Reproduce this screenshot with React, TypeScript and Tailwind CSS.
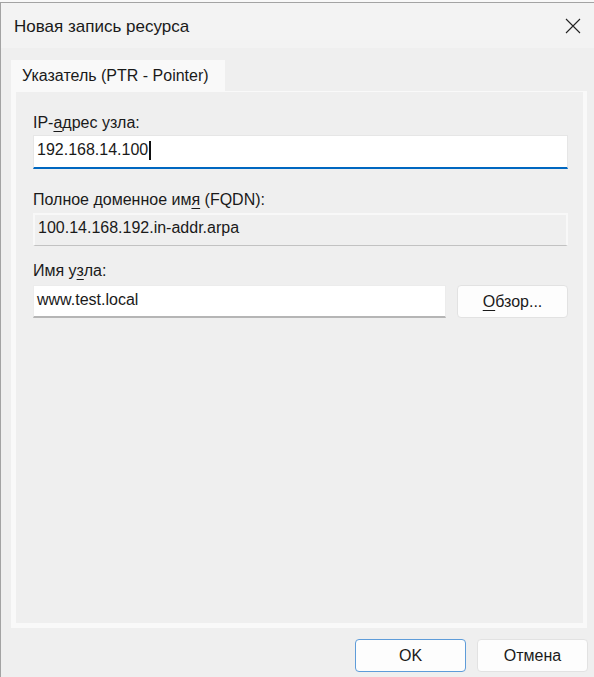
import React from 'react';

const font = "font-['Liberation_Sans',Arial,sans-serif]";

const Key: React.FC<{ children: React.ReactNode }> = ({ children }) => (
  <span className="underline decoration-1 underline-offset-[3px]">{children}</span>
);

const App: React.FC = () => {
  return (
    <div className={`w-[594px] h-[677px] bg-[#f8f8f8] pt-[2px] text-[#1a1a1a] ${font}`}>
      <div className="h-full flex flex-col border-t border-l border-[#a3a3a3] bg-[#efefef]">
        {/* title bar */}
        <div className="h-[45px] shrink-0 bg-[#f3f3f3] flex items-center pl-[13px] pr-[13px]">
          <span className="text-[17px] leading-none mt-[1px]">Новая запись ресурса</span>
          <div className="ml-auto w-[16px] h-[16px] mt-[1px]">
            <svg viewBox="0 0 16 16" width="16" height="16">
              <path d="M1 1 L15 15 M15 1 L1 15" stroke="#222" strokeWidth="1.1" fill="none" />
            </svg>
          </div>
        </div>

        {/* body */}
        <div className="flex-1 flex flex-col pl-[10px] pr-[7px] pt-[12px]">
          <div className="w-[214px] h-[31px] bg-[#f9f9f9] flex items-center pl-[11px] text-[16px]">
            Указатель (PTR - Pointer)
          </div>
          <div className="h-[537px] bg-[#f9f9f9] pl-[5px] pr-[4px] pt-[1px] pb-[5px]">
            <div className="h-full bg-[#efefef] pl-[17px] pr-[15px] pt-[22px] text-[16px]">
              <div className="h-[18px] leading-[18px]">
                IP-<Key>а</Key>дрес узла:
              </div>
              <div className="mt-[3px] h-[34px] bg-white border border-[#e6e6e6] border-b-2 border-b-[#0067c0] flex items-center pl-[3px] pb-[3px]">
                <span>192.168.14.100</span>
                <span className="inline-block w-[2px] h-[19px] bg-[#111] ml-[1px]" />
              </div>

              <div className="mt-[22px] h-[18px] leading-[18px]">
                Полное доменное им<Key>я</Key> (FQDN):
              </div>
              <div className="mt-[4px] h-[33px] bg-[#efefef] border-2 border-[#f8f8f8] border-b border-b-[#c2c2c2] flex items-center pl-[3px] pb-[4px]">
                100.14.168.192.in-addr.arpa
              </div>

              <div className="mt-[16px] h-[18px] leading-[18px]">
                Имя у<Key>з</Key>ла:
              </div>
              <div className="mt-[5px] flex gap-[11px]">
                <div className="w-[413px] h-[33px] bg-white border border-[#ececec] border-b-2 border-b-[#b5b5b5] flex items-center pl-[3px] pb-[3px]">
                  www.test.local
                </div>
                <div className="w-[111px] h-[33px] bg-[#fdfdfd] border border-[#e2e2e2] rounded-[4px] flex items-center justify-center">
                  <span>
                    <Key>О</Key>бзор...
                  </span>
                </div>
              </div>
            </div>
          </div>

          {/* footer buttons */}
          <div className="flex justify-end gap-[11px] mt-[11px] mr-[-1px]">
            <div className="w-[111px] h-[33px] bg-[#fdfdfd] border border-[#5e9cd9] rounded-[4px] flex items-center justify-center text-[16px]">
              OK
            </div>
            <div className="w-[111px] h-[33px] bg-[#fdfdfd] border border-[#e2e2e2] rounded-[4px] flex items-center justify-center text-[16px]">
              Отмена
            </div>
          </div>
        </div>
      </div>
    </div>
  );
};

export default App;
